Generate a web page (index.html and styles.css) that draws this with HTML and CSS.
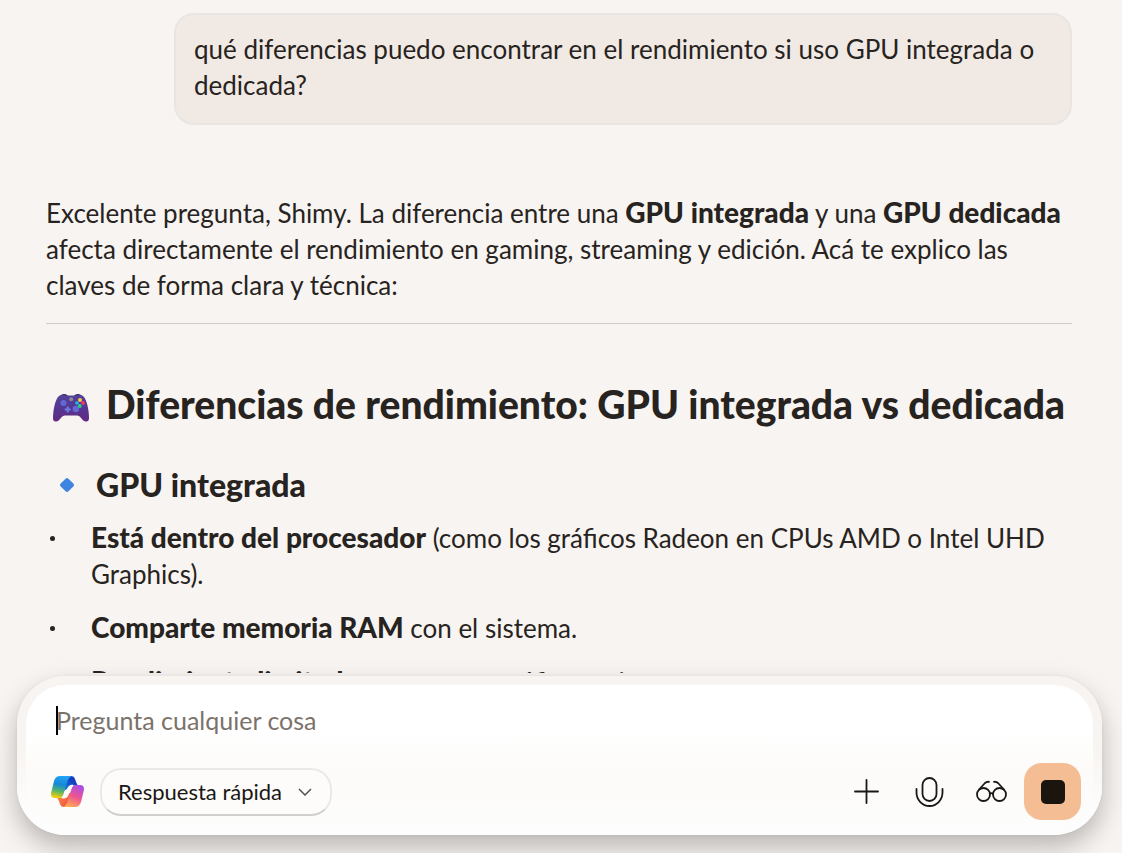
FILE: index.html
```html
<!DOCTYPE html>
<html lang="es">
<head>
<meta charset="utf-8">
<meta name="viewport" content="width=device-width, initial-scale=1">
<title>Copilot</title>
<link rel="stylesheet" href="styles.css">
</head>
<body class="app">
<main class="chat">
  <div class="bubble">qué diferencias puedo encontrar en el rendimiento si uso GPU integrada o dedicada?</div>
  <article class="answer">
    <p class="intro">Excelente pregunta, Shimy. La diferencia entre una <strong>GPU integrada</strong> y una <strong>GPU dedicada</strong> afecta directamente el rendimiento en gaming, streaming y edición. Acá te explico las claves de forma clara y técnica:</p>
    <hr class="rule">
    <h2 class="title">
      <svg class="pad" viewBox="0 0 36 28" aria-hidden="true">
        <defs>
          <linearGradient id="padBody" x1="0" y1="0" x2="0" y2="1"><stop offset="0" stop-color="#51439a"/><stop offset=".55" stop-color="#55358f"/><stop offset="1" stop-color="#632a82"/></linearGradient>
        </defs>
        <path d="M7 3Q8 0 11 0t4 2ZM21 2Q22 0 25 0t4 3Z" fill="#3a1c50"/>
        <path d="M6 2Q9 0 12 1.500H24Q27 0 30 2C34 5 36 17 36 24Q36 28 32.500 27.500C29 27 28 22 24.500 21.500H11.500C8 22 7 27 3.500 27.500Q0 28 0 24C0 17 2 5 6 2Z" fill="url(#padBody)"/>
        <circle cx="10.500" cy="9" r="3" fill="#6268d4"/>
        <circle cx="22.800" cy="15" r="3.200" fill="#6268d4"/>
        <path d="M14.700 12.500v6M11.700 15.500h6" stroke="#737be5" stroke-width="2"/>
        <circle cx="18.200" cy="5.300" r="2" fill="#8e869c"/>
        <circle cx="27" cy="6" r="2" fill="#ffc64a"/>
        <circle cx="24" cy="9" r="1.800" fill="#22b9ef"/>
        <circle cx="30" cy="9" r="1.900" fill="#f23761"/>
        <circle cx="26.800" cy="12" r="1.900" fill="#27d18b"/>
      </svg>
      <span>Diferencias de rendimiento: GPU integrada vs dedicada</span>
    </h2>
    <h3 class="subtitle">
      <svg class="diamond" viewBox="0 0 16 16" aria-hidden="true"><rect x="2.500" y="2.500" width="11" height="11" rx="2" transform="rotate(45 8 8)" fill="#3f85df"/></svg>
      <span>GPU integrada</span>
    </h3>
    <ul class="points">
      <li><strong>Está dentro del procesador</strong> (como los gráficos Radeon en CPUs AMD o Intel UHD Graphics).</li>
      <li><strong>Comparte memoria RAM</strong> con el sistema.</li>
      <li><strong>Rendimiento limitado</strong> para tareas gráficas exigentes.</li>
    </ul>
  </article>
</main>
<form class="composer">
  <div class="panel">
    <label class="field">
      <span class="caret"></span>
      <input class="prompt" type="text" placeholder="Pregunta cualquier cosa" aria-label="Pregunta cualquier cosa">
    </label>
    <div class="toolbar">
      <svg class="logo" viewBox="0 0 33 31" role="img" aria-label="Copilot">
        <defs>
          <linearGradient id="lgA" x1=".6" y1="0" x2=".4" y2="1"><stop offset="0" stop-color="#22a5f5"/><stop offset=".4" stop-color="#1688d8"/><stop offset=".7" stop-color="#55b36b"/><stop offset="1" stop-color="#f2cf0c"/></linearGradient>
          <linearGradient id="lgB" x1=".7" y1="0" x2=".3" y2="1"><stop offset="0" stop-color="#a94de5"/><stop offset=".5" stop-color="#ed5591"/><stop offset="1" stop-color="#ffad52"/></linearGradient>
          <linearGradient id="lgC" x1="0" y1="1" x2="1" y2="0"><stop offset="0" stop-color="#1687df"/><stop offset=".6" stop-color="#163fc0"/></linearGradient>
          <linearGradient id="lgD" x1="0" y1="0" x2="1" y2="1"><stop offset="0" stop-color="#ff9b3e"/><stop offset="1" stop-color="#ed4545"/></linearGradient>
        </defs>
        <path d="M16 0H20Q23 0 24 3L25.500 7Q26 9 28 9.500H22Q19 9.500 17.500 12L13 15Z" fill="url(#lgC)"/>
        <path d="M17 31H13Q10 31 9 28L7.500 24Q7 22 5 21.500H11Q14 21.500 15.500 19L20 16Z" fill="url(#lgD)"/>
        <path d="M9 0H21Q18 1 16.500 5L12.500 18Q11.500 22 8 22H4Q-1 22 .3 16L3 5Q4.500 0 9 0Z" fill="url(#lgA)"/>
        <path d="M24 31H12Q15 30 16.500 26L20.500 13Q21.500 9 25 9H29Q34 9 32.700 15L30 26Q28.500 31 24 31Z" fill="url(#lgB)"/>
        <path d="M22 9.500Q18.500 9 17 12.500L14.500 19Q13.500 21.500 11 21.500Q14.500 22.500 16.500 19.500L19 13Q20 9.800 22 9.500Z" fill="#fdfcfb" stroke="#fdfcfb" stroke-width="1.500"/>
      </svg>
      <button class="mode" type="button">
        <span>Respuesta rápida</span>
        <svg class="chevron" viewBox="0 0 14 8" aria-hidden="true"><path d="M1 1l6 6 6-6"/></svg>
      </button>
      <div class="actions">
        <button class="tool" type="button" aria-label="Agregar"><svg viewBox="0 0 32 32"><path d="M15.500 4v23M4 15.500h23"/></svg></button>
        <button class="tool" type="button" aria-label="Hablar"><svg viewBox="0 0 32 32"><rect x="9.500" y="2" width="14" height="23" rx="7"/><path d="M3.500 13v3.500a13 13.500 0 0 0 26 0v-3.500"/></svg></button>
        <button class="tool" type="button" aria-label="Visión"><svg viewBox="0 0 32 32"><circle cx="8.500" cy="18.500" r="6.500"/><circle cx="24.500" cy="18.500" r="6.500"/><path d="M15 17.700q1.500-1 3 0M4 13.500l6-6.500q1.500-1.500 4-1.200M29 13.500l-6-6.500q-1.500-1.500-4-1.200"/></svg></button>
        <button class="stop" type="button" aria-label="Detener"><span class="square"></span></button>
      </div>
    </div>
  </div>
</form>
</body>
</html>
```
FILE: styles.css
```css
* {
  box-sizing: border-box;
}

.app {
  display: flex;
  flex-direction: column;
  height: 100vh;
  margin: 0;
  overflow: hidden;
  background: #f8f4f1;
  color: #272320;
  font: 26px/36px Lato, "Open Sans", sans-serif;
}

.chat {
  flex: 1;
  min-height: 0;
  overflow: hidden;
  display: flex;
  flex-direction: column;
  padding: 13px 50px 0 46px;
}

.chat strong {
  font-size: 28px;
  font-weight: 900;
  line-height: 32px;
}

.bubble {
  flex: none;
  align-self: flex-end;
  max-width: 898px;
  padding: 16px 18px 20px;
  border: 2px solid #e8e5e2;
  border-radius: 20px;
  background: #f1eae4;
}

.answer {
  flex: none;
  padding-top: 70px;
}

.intro {
  margin: 0 0 20px;
}

.rule {
  height: 1px;
  margin: 0;
  border: 0;
  background: #cfcbc8;
}

.title {
  display: flex;
  align-items: center;
  gap: 17px;
  margin: 56px 0 0;
  padding-left: 7px;
  font-size: 39px;
  font-weight: 900;
  line-height: 48px;
  white-space: nowrap;
}

.pad {
  flex: none;
  width: 36px;
  height: 28px;
  margin-top: 8px;
}

.subtitle {
  display: flex;
  align-items: center;
  gap: 21px;
  margin: 37px 0 0;
  padding-left: 13px;
  font-size: 32px;
  font-weight: 900;
  line-height: 40px;
}

.diamond {
  width: 16px;
  height: 16px;
}

.points {
  display: grid;
  gap: 18px;
  margin: 15px 0 0;
  padding: 0;
  list-style: none;
}

.points li {
  position: relative;
  padding-left: 45px;
}

.points li::before {
  content: "";
  position: absolute;
  left: 4px;
  top: 16px;
  width: 5px;
  height: 5px;
  border-radius: 50%;
  background: #272320;
}

.composer {
  flex: none;
  margin: 3px 20px 18px 17px;
  padding: 9px 9px 0;
  border-radius: 48px;
  background: linear-gradient(#f8f4f1 45%, #fdfdfd 85%);
  box-shadow: 0 12px 26px rgba(0, 0, 0, .26), 0 0 3px rgba(0, 0, 0, .06);
}

.panel {
  padding: 15px 12px 15px 25px;
  border-radius: 39px 39px 48px 48px;
  background: linear-gradient(#fff 30%, #fcfbf9 60%, #fdfdfd);
}

.field {
  display: block;
  position: relative;
  padding-left: 5px;
}

.caret {
  position: absolute;
  left: 5px;
  top: 6px;
  width: 2px;
  height: 29px;
  background: #000;
}

.prompt {
  display: block;
  width: 100%;
  height: 40px;
  padding: 0;
  border: 0;
  outline: 0;
  background: transparent;
  color: inherit;
  font: inherit;
  font-size: 25px;
}

.prompt::placeholder {
  color: #7b726a;
  opacity: 1;
}

.toolbar {
  display: flex;
  align-items: center;
  margin-top: 23px;
}

.logo {
  width: 33px;
  height: 31px;
}

.mode {
  display: flex;
  align-items: center;
  justify-content: space-between;
  width: 232px;
  height: 48px;
  margin-left: 16px;
  padding: 0 18px 0 16px;
  border: 2px solid #ebe9e7;
  border-bottom-color: #d2d0ce;
  border-radius: 21px;
  background: #fdfcfb;
  color: #1a1815;
  font: inherit;
  font-size: 22px;
}

.chevron {
  width: 14px;
  height: 8px;
  fill: none;
  stroke: #55504c;
  stroke-width: 1.5;
}

.actions {
  display: flex;
  align-items: center;
  gap: 30px;
  margin-left: auto;
}

.tool {
  display: block;
  width: 32px;
  height: 32px;
  padding: 0;
  border: 0;
  background: transparent;
}

.tool svg {
  display: block;
  fill: none;
  stroke: #1a1815;
  stroke-width: 1.8;
  stroke-linecap: round;
}

.stop {
  display: grid;
  place-items: center;
  width: 57px;
  height: 57px;
  margin-left: -13px;
  padding: 0;
  border: 0;
  border-radius: 18px;
  background: #f5bd93;
}

.square {
  width: 24px;
  height: 24px;
  border-radius: 5px;
  background: #1a150e;
}
```
